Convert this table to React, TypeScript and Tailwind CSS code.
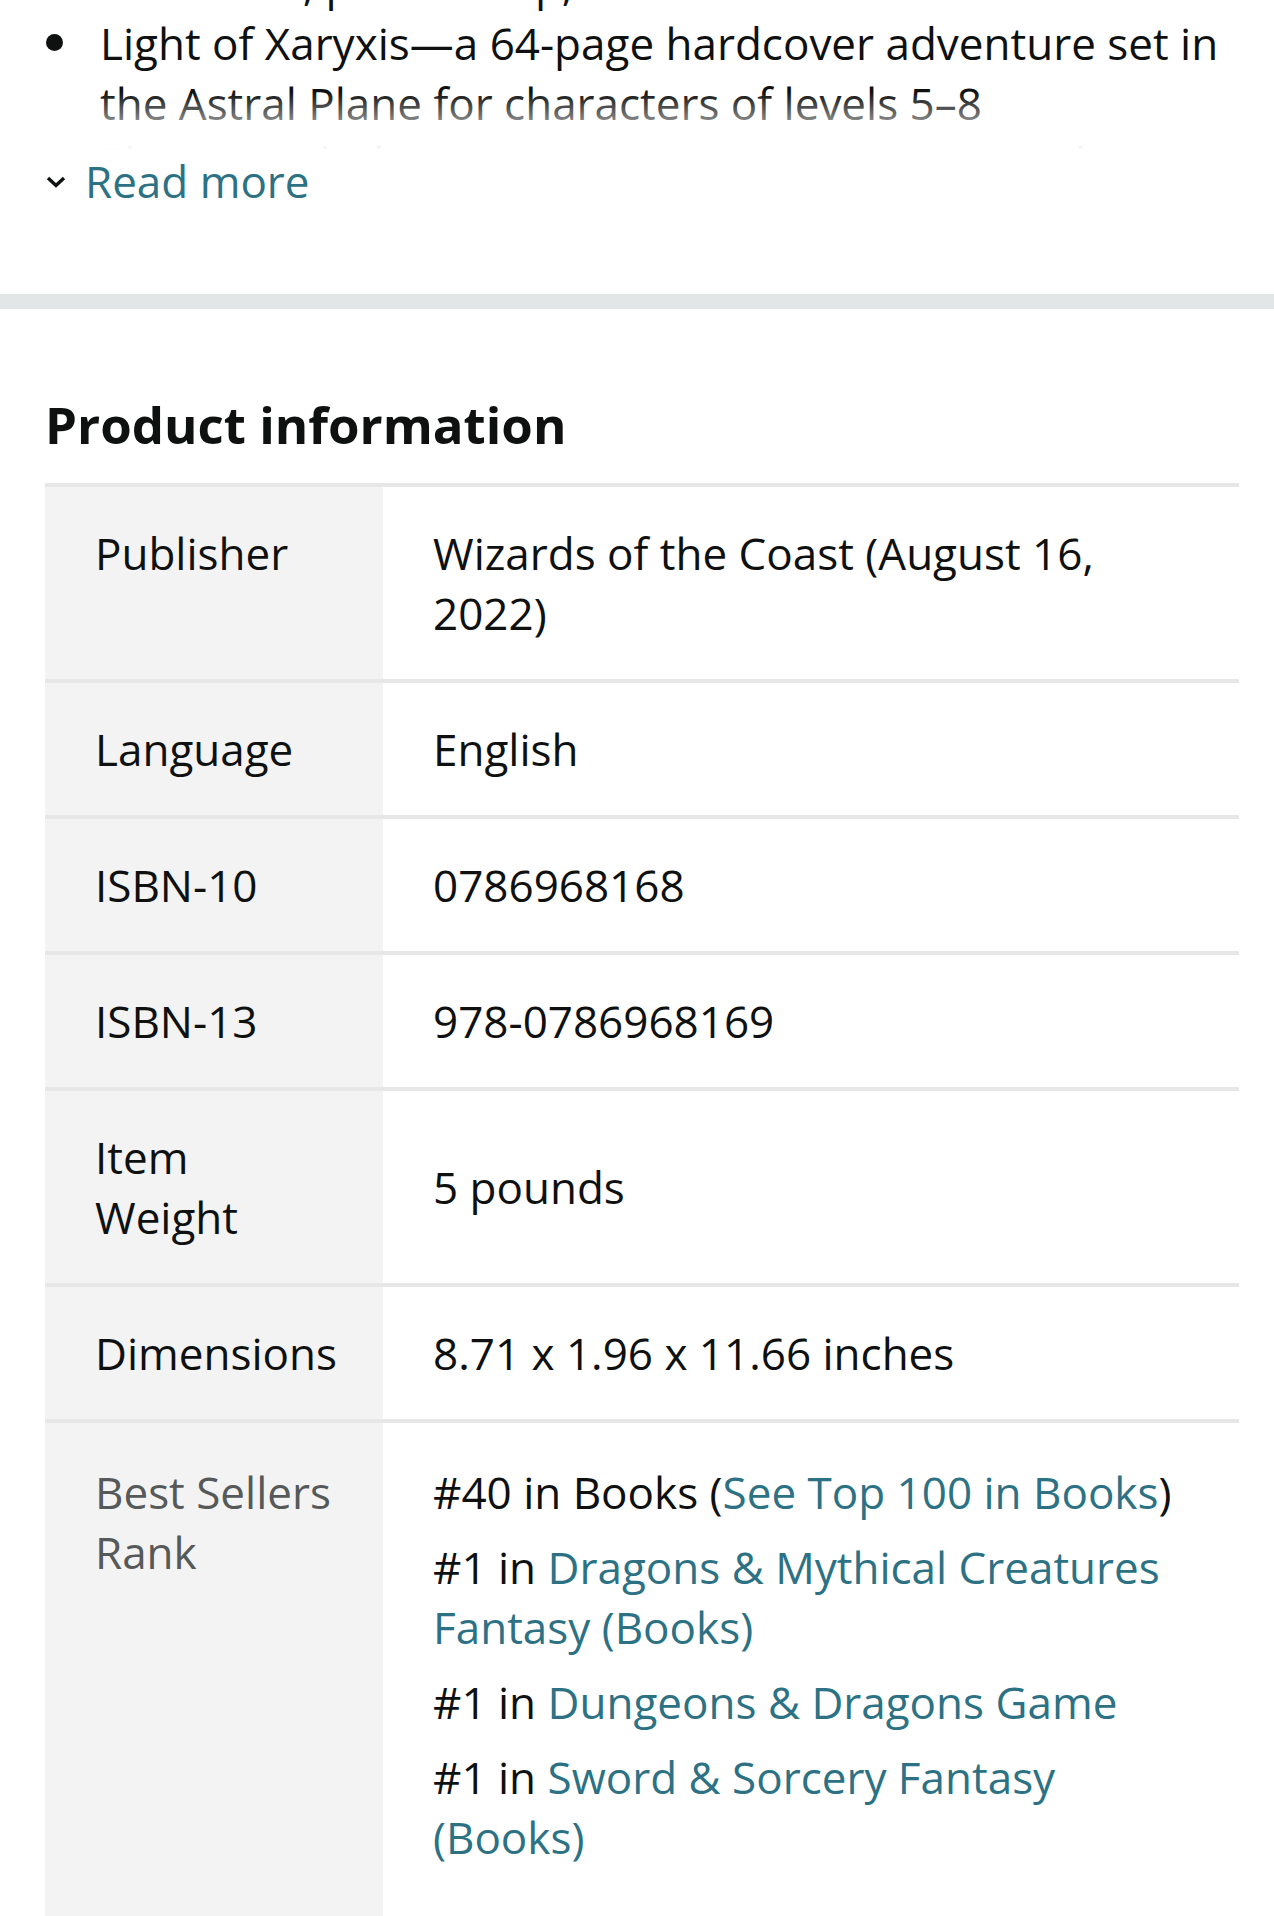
import React from "react";

const rows: { label: string[]; value: React.ReactNode }[] = [
  { label: ["Publisher"], value: <>Wizards of the Coast (August 16,<br />2022)</> },
  { label: ["Language"], value: "English" },
  { label: ["ISBN-10"], value: "0786968168" },
  { label: ["ISBN-13"], value: "978-0786968169" },
  { label: ["Item", "Weight"], value: "5 pounds" },
  { label: ["Dimensions"], value: "8.71 x 1.96 x 11.66 inches" },
];

const ranks = [
  { pre: "#40 in Books (", link: ["See Top 100 in Books"], post: ")" },
  { pre: "#1 in ", link: ["Dragons & Mythical Creatures", "Fantasy (Books)"] },
  { pre: "#1 in ", link: ["Dungeons & Dragons Game"] },
  { pre: "#1 in ", link: ["Sword & Sorcery Fantasy", "(Books)"] },
];

function Bullet({ children }: { children: React.ReactNode }) {
  return (
    <li className="flex">
      <span className="w-[55px] shrink-0 flex items-start pt-[21px] pl-[1px]">
        <span className="block size-[17px] rounded-full bg-[#0f1111]" />
      </span>
      <span>{children}</span>
    </li>
  );
}

export default function App() {
  return (
    <div className="w-[1274px] bg-white text-[#0f1111] text-[44px] leading-[60px] font-['Open_Sans',sans-serif]">
      {/* description, clipped with fade */}
      <div className="pl-[45px] pr-[35px]">
        <div className="relative h-[150px] overflow-hidden">
          <ul className="-mt-[47px] whitespace-nowrap">
            <Bullet>Stat cards, poster map, and DM screen</Bullet>
            <Bullet>
              Light of Xaryxis—a 64-page hardcover adventure set in
              <br />
              the Astral Plane for characters of levels 5–8
            </Bullet>
            <Bullet>The set includes a Dungeon Master’s screen and a map</Bullet>
          </ul>
          <div className="absolute inset-x-0 bottom-0 h-[58px] bg-gradient-to-b from-white/0 to-white" />
        </div>
        <button className="mt-[1px] flex h-[60px] items-center text-[#2d7284]">
          <svg width="22" height="14" viewBox="0 0 22 14" className="mr-[18px] mt-[2px]">
            <path d="M3 3 L11 10.5 L19 3" fill="none" stroke="#0f1111" strokeWidth="3.4" />
          </svg>
          Read more
        </button>
        <div className="h-[83px]" />
      </div>

      <div className="h-[15px] bg-[#e3e6e6]" />

      <div className="pl-[45px] pr-[35px] pt-[79px]">
        <h2 className="text-[51px] leading-[72px] font-bold mb-[23px]">Product information</h2>
        <div className="border-t-4 border-[#e7e7e7]">
          {rows.map((r) => (
            <div key={r.label.join(" ")} className="flex border-b-4 border-[#e7e7e7]">
              <div className="w-[338px] shrink-0 bg-[#f3f3f3] py-[36px] pl-[50px] pr-[16px]">
                {r.label.map((l) => (
                  <div key={l}>{l}</div>
                ))}
              </div>
              <div className="flex-1 py-[36px] pl-[50px] pr-[30px] flex items-center">
                <div>{r.value}</div>
              </div>
            </div>
          ))}
          <div className="flex">
            <div className="w-[338px] shrink-0 bg-[#f3f3f3] pt-[39px] pb-[60px] pl-[50px] text-[#565959]">
              <div>Best Sellers</div>
              <div>Rank</div>
            </div>
            <div className="flex-1 pt-[39px] pb-[60px] pl-[50px] pr-[30px] flex flex-col gap-[15px] whitespace-nowrap">
              {ranks.map((k, i) => (
                <div key={i}>
                  {k.pre}
                  {k.link.map((l, j) => (
                    <React.Fragment key={j}>
                      {j > 0 && <br />}
                      <a className="text-[#2d7284]">{l}</a>
                    </React.Fragment>
                  ))}
                  {k.post}
                </div>
              ))}
            </div>
          </div>
        </div>
      </div>
    </div>
  );
}
